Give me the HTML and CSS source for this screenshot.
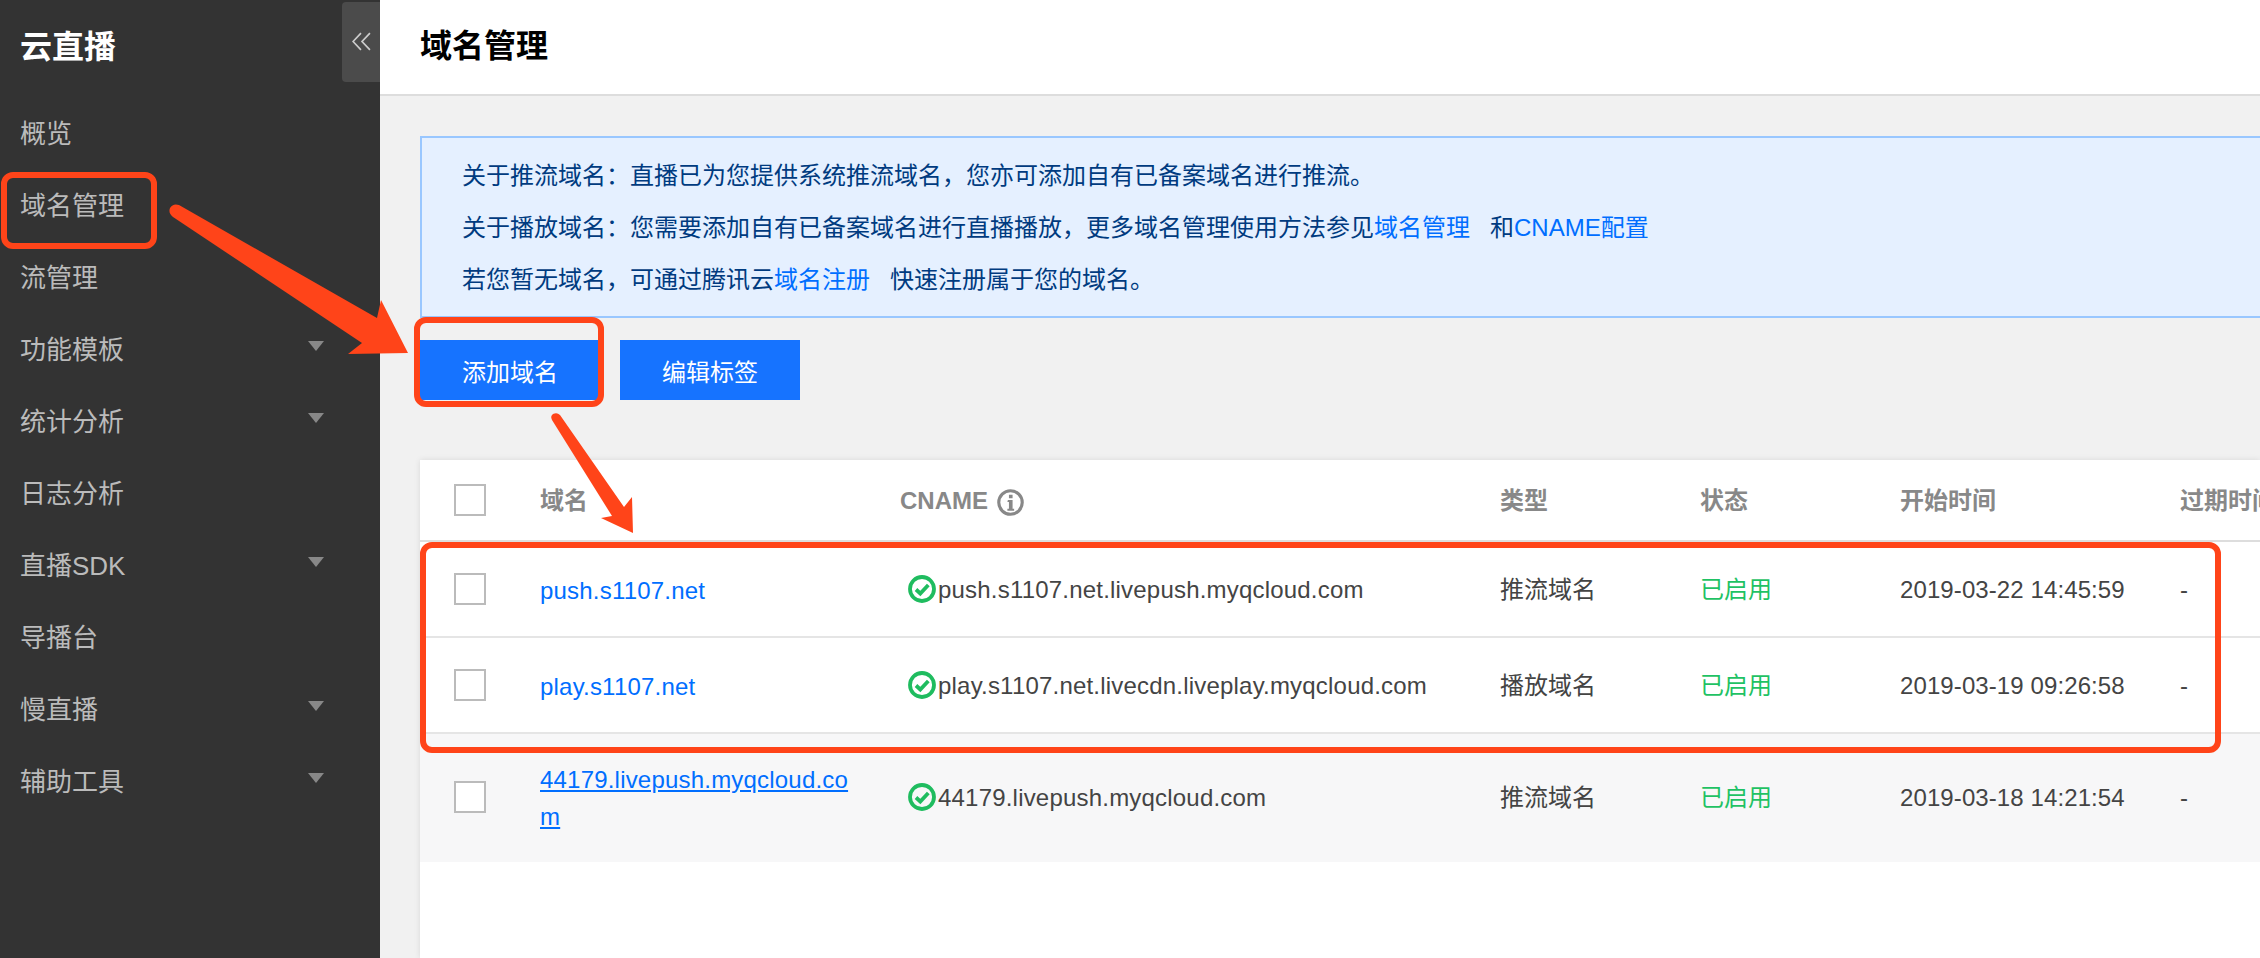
FILE: index.html
```html
<!DOCTYPE html>
<html lang="zh-CN">
<head>
<meta charset="utf-8">
<title>域名管理 - 云直播</title>
<link rel="stylesheet" href="styles.css">
</head>
<body>
<div class="app">
  <aside class="sidebar">
    <div class="brand">
      <span class="brand-name">云直播</span>
      <button class="collapse" type="button" aria-label="收起">
        <svg class="collapse-icon" viewBox="0 0 18 18"><path d="M8.5 1 1 9l7.500 8M17 1 9.500 9l7.500 8"/></svg>
      </button>
    </div>
    <nav class="nav">
      <a class="nav-item">概览</a>
      <a class="nav-item">域名管理</a>
      <a class="nav-item">流管理</a>
      <a class="nav-item">功能模板<i class="caret"></i></a>
      <a class="nav-item">统计分析<i class="caret"></i></a>
      <a class="nav-item">日志分析</a>
      <a class="nav-item">直播SDK<i class="caret"></i></a>
      <a class="nav-item">导播台</a>
      <a class="nav-item">慢直播<i class="caret"></i></a>
      <a class="nav-item">辅助工具<i class="caret"></i></a>
    </nav>
  </aside>
  <main class="main">
    <header class="page-head"><h1 class="page-title">域名管理</h1></header>
    <div class="content">
      <section class="notice">
        <p>关于推流域名：直播已为您提供系统推流域名，您亦可添加自有已备案域名进行推流。</p>
        <p>关于播放域名：您需要添加自有已备案域名进行直播播放，更多域名管理使用方法参见<a class="link link-gap">域名管理</a>和<a class="link">CNAME配置</a></p>
        <p>若您暂无域名，可通过腾讯云<a class="link link-gap">域名注册</a>快速注册属于您的域名。</p>
      </section>
      <div class="actions">
        <button class="btn" type="button">添加域名</button>
        <button class="btn" type="button">编辑标签</button>
      </div>
      <section class="card">
        <table class="table">
          <colgroup>
            <col class="col-check"><col class="col-domain"><col class="col-cname"><col class="col-type"><col class="col-status"><col class="col-start"><col class="col-end">
          </colgroup>
          <thead>
            <tr>
              <th class="cell-check"><span class="checkbox"></span></th>
              <th>域名</th>
              <th><span class="cname-head">CNAME
                <svg class="info" viewBox="0 0 26 26"><circle cx="13" cy="13" r="11.300"/><path class="info-mark" d="M10.500 10.500h4.500v8.500h1.500v2h-6.500v-2h1.500v-6.500h-1.500zM11.500 5.500h3.500v3.300h-3.500z"/></svg>
              </span></th>
              <th>类型</th>
              <th>状态</th>
              <th>开始时间</th>
              <th>过期时间</th>
            </tr>
          </thead>
          <tbody>
            <tr>
              <td class="cell-check"><span class="checkbox"></span></td>
              <td><a class="link domain">push.s1107.net</a></td>
              <td><span class="cname"><svg class="ok" viewBox="0 0 28 28"><circle cx="14" cy="14" r="12"/><path d="M8 14.500l4.300 4L20.300 10"/></svg>push.s1107.net.livepush.myqcloud.com</span></td>
              <td>推流域名</td>
              <td class="enabled">已启用</td>
              <td class="date">2019-03-22 14:45:59</td>
              <td class="date">-</td>
            </tr>
            <tr>
              <td class="cell-check"><span class="checkbox"></span></td>
              <td><a class="link domain">play.s1107.net</a></td>
              <td><span class="cname"><svg class="ok" viewBox="0 0 28 28"><circle cx="14" cy="14" r="12"/><path d="M8 14.500l4.300 4L20.300 10"/></svg>play.s1107.net.livecdn.liveplay.myqcloud.com</span></td>
              <td>播放域名</td>
              <td class="enabled">已启用</td>
              <td class="date">2019-03-19 09:26:58</td>
              <td class="date">-</td>
            </tr>
            <tr class="row-hover">
              <td class="cell-check"><span class="checkbox"></span></td>
              <td><a class="link domain domain-wrap">44179.livepush.myqcloud.com</a></td>
              <td><span class="cname"><svg class="ok" viewBox="0 0 28 28"><circle cx="14" cy="14" r="12"/><path d="M8 14.500l4.300 4L20.300 10"/></svg>44179.livepush.myqcloud.com</span></td>
              <td>推流域名</td>
              <td class="enabled">已启用</td>
              <td class="date">2019-03-18 14:21:54</td>
              <td class="date">-</td>
            </tr>
          </tbody>
        </table>
      </section>
    </div>
  </main>
  <svg class="markup" viewBox="0 0 2260 958" aria-hidden="true">
    <rect class="mark-box" x="4" y="175" width="150" height="71" rx="9"/>
    <rect class="mark-box" x="417" y="320" width="184" height="84" rx="9"/>
    <rect class="mark-box" x="423" y="545" width="1795" height="205" rx="9"/>
    <path class="mark-arrow" d="M179 205 377 318 381 300 408 353 348 354 362 343 173 217Q168 213 170 208 173 203 179 205Z"/>
    <path class="mark-arrow" d="M560 415 624 507 632 497 633 533 601 518 612 516 552 420Q550 416 553 414 557 412 560 415Z"/>
  </svg>
</div>
</body>
</html>
```
FILE: styles.css
```css
* { box-sizing: border-box; }
html, body { margin: 0; height: 100%; }
body {
  font-family: "Liberation Sans", "Noto Sans CJK SC", sans-serif;
  font-size: 24px;
  color: #444;
  background: #f1f1f1;
  overflow: hidden;
}
p { margin: 0; }
.app { position: relative; display: flex; height: 958px; overflow: hidden; }

.sidebar { flex: 0 0 380px; background: #333; color: #bbb; }
.brand { display: flex; align-items: flex-start; justify-content: space-between; height: 95px; padding: 2px 0 0 20px; }
.brand-name { font-size: 32px; line-height: 90px; font-weight: 700; color: #fff; }
.collapse { display: flex; align-items: center; justify-content: center; width: 38px; height: 80px; padding: 0; border: 0; border-radius: 4px 0 0 4px; background: #4b4b4b; }
.collapse-icon { width: 19px; height: 19px; margin-bottom: 2px; fill: none; stroke: #ccc; stroke-width: 1.600; }
.nav { display: flex; flex-direction: column; }
.nav-item { display: flex; align-items: center; justify-content: space-between; height: 72px; padding: 0 56px 0 20px; font-size: 26px; }
.caret { width: 0; height: 0; margin-top: -2px; border-left: 8px solid transparent; border-right: 8px solid transparent; border-top: 10px solid #888; }

.main { flex: 1; min-width: 0; display: flex; flex-direction: column; overflow: hidden; }
.page-head { flex: 0 0 96px; display: flex; align-items: center; padding: 0 0 8px 40px; background: #fff; border-bottom: 2px solid #ddd; }
.page-title { margin: 0; font-size: 32px; font-weight: 700; color: #000; }
.content { flex: 1; display: flex; flex-direction: column; padding: 40px 0 0 40px; min-height: 0; }

.notice { padding: 12px 0 10px 40px; background: #e5f0ff; border: 2px solid #99c7ff; border-right: 0; color: #003b80; line-height: 52px; }
.link { color: #006eff; }
.link-gap { margin-right: 20px; }

.actions { display: flex; gap: 20px; margin-top: 22px; }
.btn { width: 180px; height: 60px; padding: 0; border: 0; font: inherit; color: #fff; background: #1673ff; }

.card { flex: 1; margin-top: 60px; background: #fff; box-shadow: 0 0 6px rgba(0, 0, 0, .1); overflow: hidden; }
.table { table-layout: fixed; width: 1960px; border-collapse: separate; border-spacing: 0; line-height: 37px; }
.col-check { width: 120px; }
.col-domain { width: 360px; }
.col-cname { width: 600px; }
.col-type, .col-status, .col-end { width: 200px; }
.col-start { width: 280px; }
th, td { padding: 0; text-align: left; vertical-align: middle; }
th { height: 82px; font-weight: 700; color: #888; border-bottom: 2px solid #ddd; }
td { height: 96px; border-bottom: 2px solid #e5e5e5; }
.row-hover td { height: 128px; padding-bottom: 2px; border-bottom: 0; background: #f7f7f8; }
.cell-check { padding-left: 34px; }
.checkbox { display: block; width: 32px; height: 32px; border: 2px solid #bbb; background: #fff; }
.cname-head { display: inline-flex; align-items: center; gap: 9px; }
.info { width: 27px; height: 27px; margin-top: 4px; fill: none; stroke: #888; stroke-width: 3; }
.info-mark { fill: #888; stroke: none; }
.domain { display: inline-block; position: relative; top: 1px; letter-spacing: .2px; }
.domain-wrap { display: block; top: 1px; width: 320px; word-break: break-all; text-decoration: underline; }
.cname { display: flex; align-items: center; padding-left: 8px; letter-spacing: .2px; }
.ok { flex: none; width: 28px; height: 28px; margin-right: 2px; fill: none; stroke: #1fbc5f; stroke-width: 3.800; }
.enabled { color: #1fc264; }
.date { color: #444; letter-spacing: .1px; }

.markup { position: absolute; left: 0; top: 0; width: 2260px; height: 958px; pointer-events: none; }
.mark-box { fill: none; stroke: #ff4419; stroke-width: 6; }
.mark-arrow { fill: #ff4419; }
```
